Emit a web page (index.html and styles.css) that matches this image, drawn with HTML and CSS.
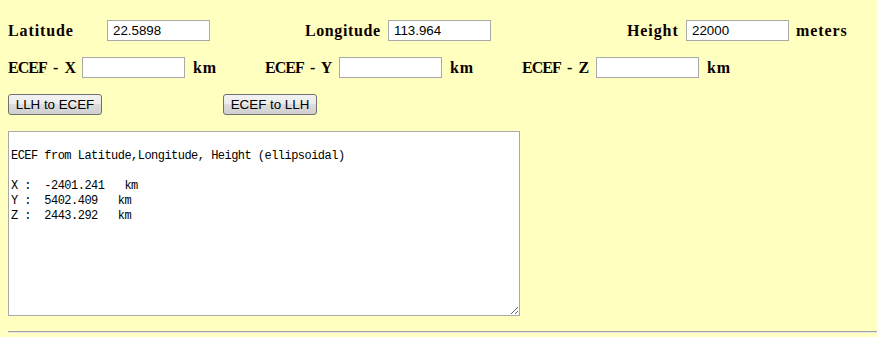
FILE: index.html
```html
<!DOCTYPE html>
<html lang="en">
<head>
    <meta charset="UTF-8">
    <title>LLH / ECEF Converter</title>
    <link rel="stylesheet" href="styles.css">
</head>
<body>
    <div class="row llh-row">
        <label class="lbl lat-lbl" for="lat">Latitude</label>
        <input class="field" type="text" id="lat" value="22.5898">
        <label class="lbl lon-lbl" for="lon">Longitude</label>
        <input class="field" type="text" id="lon" value="113.964">
        <label class="lbl hgt-lbl" for="hgt">Height</label>
        <input class="field" type="text" id="hgt" value="22000">
        <span class="lbl unit">meters</span>
    </div>

    <div class="row ecef-row">
        <div class="group">
            <label class="lbl axis" for="ex">ECEF - X</label>
            <input class="field" type="text" id="ex">
            <span class="lbl unit">km</span>
        </div>
        <div class="group">
            <label class="lbl axis" for="ey">ECEF - Y</label>
            <input class="field" type="text" id="ey">
            <span class="lbl unit">km</span>
        </div>
        <div class="group">
            <label class="lbl axis" for="ez">ECEF - Z</label>
            <input class="field" type="text" id="ez">
            <span class="lbl unit">km</span>
        </div>
    </div>

    <div class="row actions">
        <button class="btn" type="button">LLH to ECEF</button>
        <button class="btn" type="button">ECEF to LLH</button>
    </div>

    <textarea class="output">

ECEF from Latitude,Longitude, Height (ellipsoidal)

X :  -2401.241   km
Y :  5402.409   km
Z :  2443.292   km</textarea>

    <hr class="rule">
</body>
</html>
```

FILE: styles.css
```css
body {
    margin: 8px 0 8px 8px;
    background: #ffffc0;
    overflow: hidden;
}

.row {
    display: flex;
    align-items: center;
    height: 21px;
}

.row > *,
.group > * {
    flex-shrink: 0;
}

.lbl {
    font-family: "Liberation Serif", "DejaVu Serif", serif;
    font-weight: bold;
    font-size: 16px;
    letter-spacing: 0.9px;
    color: #0a0000;
    white-space: pre;
}

.field {
    box-sizing: border-box;
    width: 103px;
    height: 21px;
    padding: 1px 5px;
    border: 1px solid #a9a9a9;
    background: #fff;
    font-family: "Liberation Sans", Arial, sans-serif;
    font-size: 13.33px;
    color: #000;
    outline: none;
}

.llh-row {
    margin-top: 12px;
}

.lat-lbl {
    width: 99px;
}

.lon-lbl {
    width: 76px;
    margin-left: 95px;
    margin-right: 7px;
    letter-spacing: 0.6px;
}

.hgt-lbl {
    width: 51px;
    margin-left: 136px;
    margin-right: 8px;
}

.llh-row .unit {
    margin-left: 7px;
}

.ecef-row {
    margin-top: 16px;
}

.group {
    display: flex;
    align-items: center;
    gap: 7px;
    width: 257px;
    flex-shrink: 0;
}

.axis {
    width: 67px;
    letter-spacing: -1px;
    word-spacing: 4px;
}

.group .unit {
    margin-left: 1px;
}

.actions {
    margin-top: 16px;
    gap: 121px;
}

.btn {
    box-sizing: border-box;
    width: 94px;
    height: 21px;
    padding: 0;
    border: 1px solid #707070;
    border-radius: 3px;
    background: linear-gradient(#f2f2f2, #ebebeb 50%, #dddddd 50%, #cfcfcf);
    font-family: "Liberation Sans", Arial, sans-serif;
    font-size: 13.33px;
    color: #000;
}

.output {
    display: block;
    box-sizing: border-box;
    width: 512px;
    height: 185px;
    margin-top: 16px;
    padding: 2px;
    border: 1px solid #a9a9a9;
    background: #fff;
    font-family: "Liberation Mono", "DejaVu Sans Mono", monospace;
    font-size: 12px;
    letter-spacing: -0.53px;
    line-height: 15px;
    color: #000;
}

.rule {
    margin: 15px 0 0;
    border: 0;
    border-top: 1px solid #a0a0a0;
    border-bottom: 1px solid #e8e8e8;
}
```
